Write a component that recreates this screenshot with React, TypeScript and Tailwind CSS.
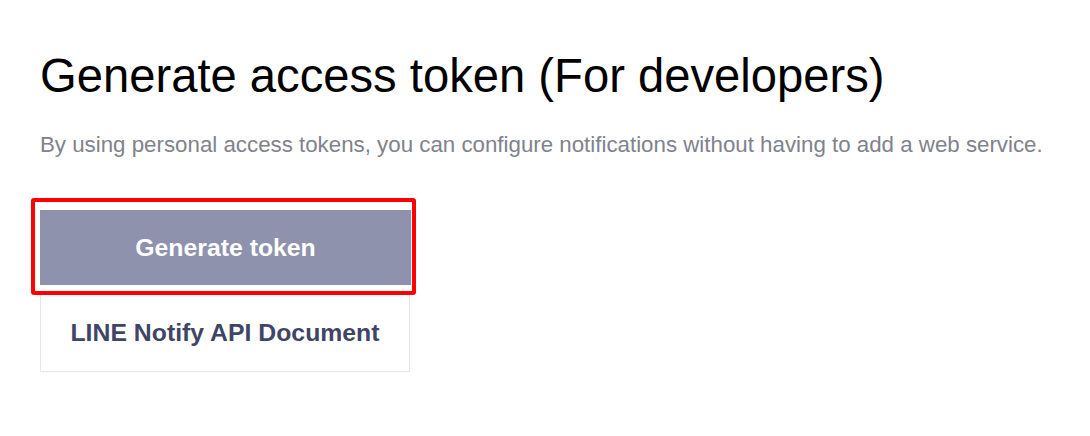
export default function App() {
  return (
    <div className="min-h-[436px] w-[1090px] bg-white pl-[40px] pt-[49px] font-['Liberation_Sans',Arial,sans-serif]">
      <h1 className="text-[47.2px] leading-[54px] text-black">Generate access token (For developers)</h1>
      <p className="mt-[28px] text-[22.3px] leading-[28px] text-[#80828c]">
        By using personal access tokens, you can configure notifications without having to add a web service.
      </p>
      <div className="mt-[51px] flex w-[371px] flex-col">
        <div className="relative">
          <button className="flex h-[75px] w-full items-center justify-center bg-[#8e92ad] text-[24.8px] font-bold text-white">
            Generate token
          </button>
          <div className="pointer-events-none absolute -top-[12px] -left-[9px] -right-[5px] -bottom-[10px] rounded-[3px] border-[4px] border-[#ff0000]" />
        </div>
        <button className="mt-[10px] flex h-[77px] w-[370px] items-center justify-center border border-t-0 border-[#e6e6e6] bg-white text-[24.8px] font-bold text-[#3f4566]">
          LINE Notify API Document
        </button>
      </div>
    </div>
  )
}
